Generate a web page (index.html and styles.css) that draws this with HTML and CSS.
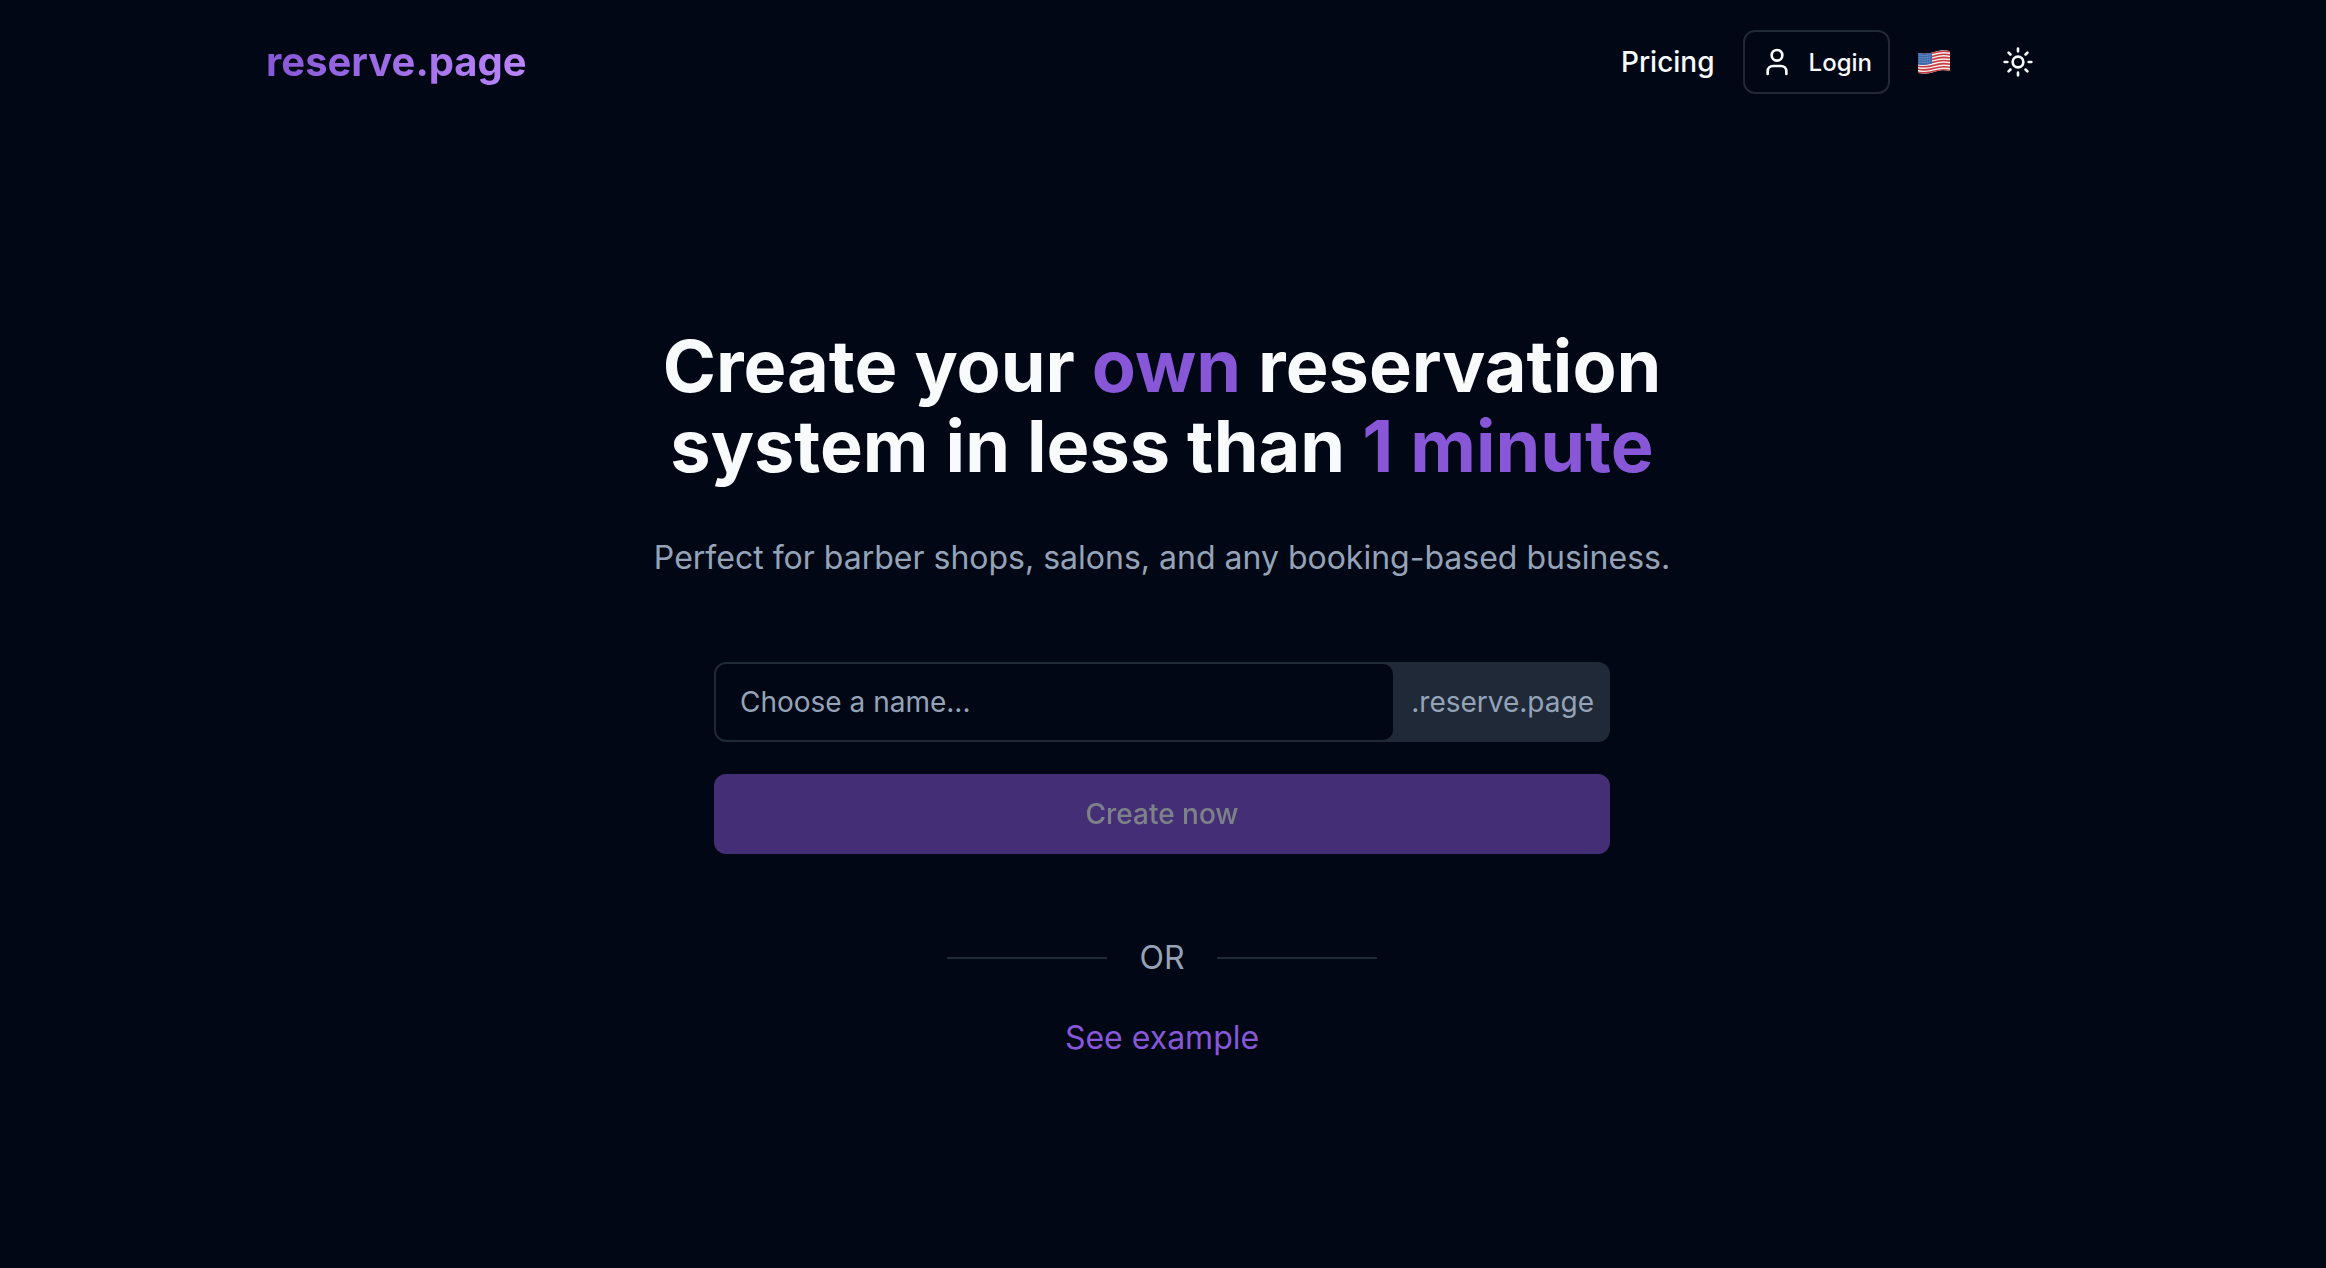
FILE: index.html
```html
<!DOCTYPE html>
<html lang="en">
<head>
	<meta charset="utf-8">
	<meta name="viewport" content="width=device-width, initial-scale=1">
	<title>reserve.page</title>
	<link rel="stylesheet" href="styles.css">
</head>
<body>
	<header class="header">
		<a class="logo" href="#">reserve.page</a>
		<nav class="nav">
			<a class="nav-link" href="#pricing">Pricing</a>
			<a class="login" href="#login">
				<svg class="icon" viewBox="0 0 24 24" aria-hidden="true">
					<path d="M19 21v-2a4 4 0 0 0-4-4H9a4 4 0 0 0-4 4v2"/>
					<circle cx="12" cy="7" r="4"/>
				</svg>
				Login
			</a>
			<button class="icon-button language" type="button" aria-label="Language">
				<svg class="flag" viewBox="0 0 32 24" aria-hidden="true">
					<defs>
						<clipPath id="wave">
							<path d="M0 3C6 4 10 4 16 2C22 0 27 0 32 1V21C27 20 22 20 16 22C10 24 6 24 0 23Z"/>
						</clipPath>
					</defs>
					<g clip-path="url(#wave)">
						<rect width="32" height="24" fill="#f3eeee"/>
						<g class="stripes">
							<path d="M0 3.8C6 4.8 10 4.8 16 2.8S27 .8 32 1.8"/>
							<path d="M0 6.9C6 7.9 10 7.9 16 5.9S27 3.9 32 4.9"/>
							<path d="M0 10C6 11 10 11 16 9S27 7 32 8"/>
							<path d="M0 13.1C6 14.1 10 14.1 16 12.1S27 10.1 32 11.1"/>
							<path d="M0 16.2C6 17.2 10 17.2 16 15.2S27 13.2 32 14.2"/>
							<path d="M0 19.3C6 20.3 10 20.3 16 18.3S27 16.3 32 17.3"/>
							<path d="M0 22.3C6 23.3 10 23.3 16 21.3S27 19.3 32 20.3"/>
						</g>
						<path d="M0 2H14V13.6C9 15.3 5 15.2 0 14.4Z" fill="#3e69ad"/>
						<g class="stars">
							<path d="M1.5 5.2C6 5.8 9 5.6 13 4.4"/>
							<path d="M1.5 7.5C6 8.1 9 7.9 13 6.7"/>
							<path d="M1.5 9.8C6 10.4 9 10.2 13 9"/>
							<path d="M1.5 12.1C6 12.7 9 12.5 13 11.3"/>
						</g>
					</g>
				</svg>
			</button>
			<button class="icon-button" type="button" aria-label="Toggle theme">
				<svg class="icon" viewBox="0 0 24 24" aria-hidden="true">
					<circle cx="12" cy="12" r="4"/>
					<path d="M12 2v2M12 20v2M4.93 4.93l1.41 1.41M17.66 17.66l1.41 1.41M2 12h2M20 12h2M6.34 17.66l-1.41 1.41M19.07 4.93l-1.41 1.41"/>
				</svg>
			</button>
		</nav>
	</header>

	<main class="hero">
		<h1 class="title">Create your <span class="accent">own</span> reservation<br>system in less than <span class="accent">1 minute</span></h1>
		<p class="subtitle">Perfect for barber shops, salons, and any booking-based business.</p>

		<form class="form">
			<div class="field">
				<input class="field-input" id="name" type="text" placeholder="Choose a name..." aria-label="Choose a name">
				<label class="field-suffix" for="name">.reserve.page</label>
			</div>
			<button class="submit" type="submit" disabled>Create now</button>
		</form>

		<div class="divider">OR</div>
		<a class="example" href="#example">See example</a>
	</main>
</body>
</html>
```
FILE: styles.css
```css
* {
	box-sizing: border-box;
}

body {
	margin: 0;
	padding-right: 2px;
	min-height: 100vh;
	display: flex;
	flex-direction: column;
	background-color: #010714;
	color: #f8fafc;
	font-family: Inter, "Liberation Sans", sans-serif;
}

a {
	color: inherit;
	text-decoration: none;
}

button,
input {
	font-family: inherit;
}

/* header */

.header {
	display: flex;
	align-items: center;
	justify-content: space-between;
	width: 100%;
	max-width: 2048px;
	margin: 0 auto;
	padding: 30px 128px;
}

.logo {
	font-size: 40px;
	font-weight: 700;
	line-height: 56px;
	background-image: linear-gradient(to right, #8757d7, #b985f8);
	-webkit-background-clip: text;
	background-clip: text;
	color: transparent;
}

.nav {
	display: flex;
	align-items: center;
	gap: 4px;
}

.nav-link {
	margin-right: 24px;
	font-size: 28px;
	font-weight: 500;
}

.login {
	display: flex;
	align-items: center;
	gap: 16px;
	height: 64px;
	padding: 0 16px;
	border: 2px solid #1f2937;
	border-radius: 12px;
	font-size: 24px;
	font-weight: 500;
}

.icon {
	display: block;
	width: 32px;
	height: 32px;
	fill: none;
	stroke: currentColor;
	stroke-width: 2;
	stroke-linecap: round;
	stroke-linejoin: round;
}

.icon-button {
	padding: 16px 24px;
	border: 0;
	border-radius: 12px;
	background: none;
	color: inherit;
	cursor: pointer;
}

.flag {
	display: block;
	width: 32px;
	height: 24px;
}

.stripes {
	fill: none;
	stroke: #c93a40;
	stroke-width: 1.6;
}

.stars {
	fill: none;
	stroke: #a9c0e0;
	stroke-width: 0.8;
	stroke-dasharray: 0.8 1.2;
}

/* hero */

.hero {
	flex: 1;
	display: flex;
	flex-direction: column;
	align-items: center;
	justify-content: center;
	padding: 0 32px 4px;
	text-align: center;
}

.title {
	margin: 0 0 48px;
	font-size: 72px;
	font-weight: 700;
	line-height: 80px;
}

.accent,
.example {
	color: #8757d7;
}

.subtitle {
	margin: 0 0 80px;
	color: #94a3b8;
	font-size: 32px;
	line-height: 48px;
}

.form {
	display: flex;
	flex-direction: column;
	gap: 32px;
	width: 100%;
	max-width: 896px;
	margin-bottom: 80px;
}

.field {
	display: flex;
	align-items: center;
	height: 80px;
	padding: 2px;
	border-radius: 12px;
	background-color: #1f2937;
}

.field-input {
	flex: 1;
	min-width: 0;
	height: 100%;
	padding: 0 24px;
	border: 0;
	border-radius: 10px;
	background-color: #010714;
	color: #f8fafc;
	font-size: 28px;
}

.field-input::placeholder {
	color: #94a3b8;
	opacity: 1;
}

.field-suffix {
	padding: 0 14px 0 18px;
	color: #94a3b8;
	font-size: 28px;
}

.submit {
	height: 80px;
	border: 0;
	border-radius: 12px;
	background-color: #8757d7;
	color: #f8fafc;
	font-size: 28px;
	font-weight: 500;
	opacity: 0.5;
}

.divider {
	display: flex;
	align-items: center;
	gap: 32px;
	margin-bottom: 32px;
	color: #94a3b8;
	font-size: 32px;
	line-height: 48px;
}

.divider::before,
.divider::after {
	content: "";
	width: 160px;
	height: 2px;
	background-color: #1f2937;
}

.example {
	font-size: 32px;
	line-height: 48px;
}
```
